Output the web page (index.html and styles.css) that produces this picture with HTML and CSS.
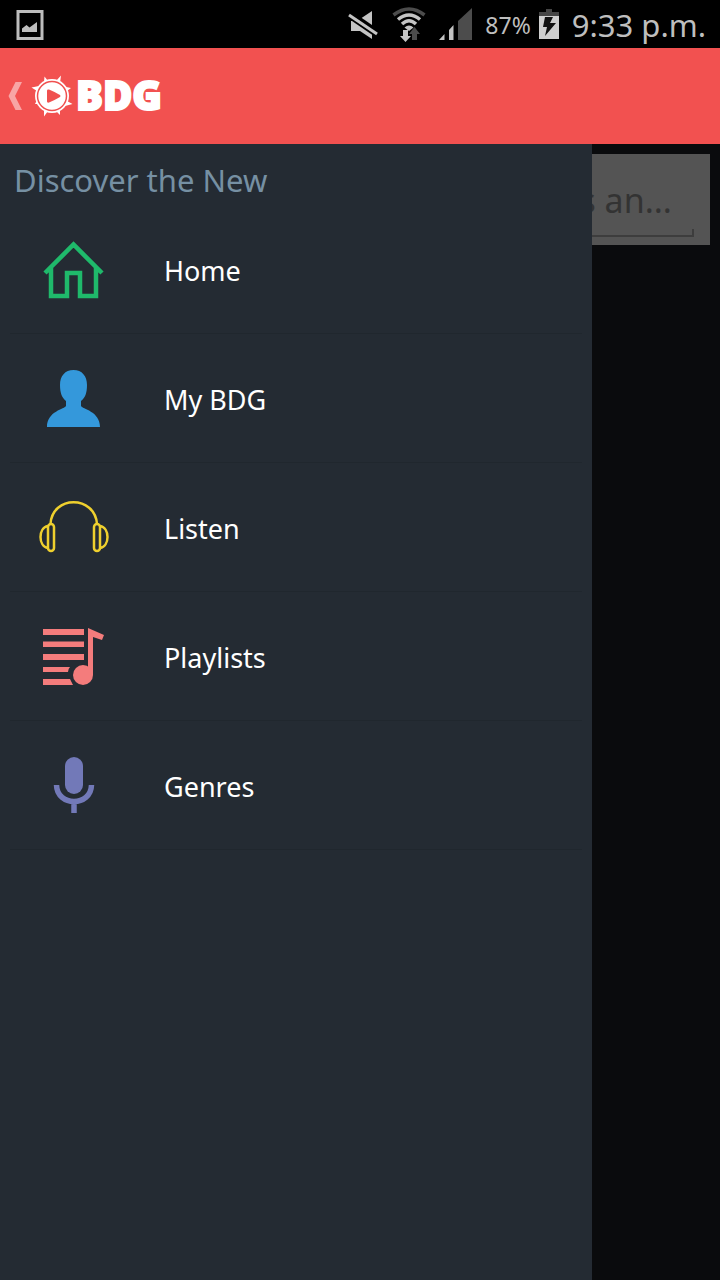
FILE: index.html
```html
<!DOCTYPE html>
<html lang="en">
<head>
<meta charset="utf-8">
<meta name="viewport" content="width=device-width, initial-scale=1">
<title>BDG</title>
<link rel="stylesheet" href="styles.css">
</head>
<body>
<div class="statusbar">
  <svg class="shot" width="28" height="32" viewBox="0 0 28 32"><path d="M2 3.500H26V30.500H2Z" fill="none" stroke="#bdbdbd" stroke-width="3"/><path d="M6 24V20.500L10.500 17L13.500 19.500L21 14V24Z" fill="#bdbdbd"/></svg>
  <div class="signals">
    <svg width="32" height="32" viewBox="0 0 32 32"><path d="M3 13H9L24 3V31L12 23H3Z" fill="#c4c4c4"/><path d="M1 6L30 26" stroke="#000" stroke-width="8"/><path d="M1 7L29 26" stroke="#c4c4c4" stroke-width="3"/></svg>
    <svg class="wifi" width="34" height="36" viewBox="0 0 34 36"><g fill="none" stroke-width="3.500"><path d="M1.500 9Q17-3 32.500 9" stroke="#4c4c4c"/><path d="M6 13.500Q17 4.500 28 13.500M10 18Q17 11.500 24 18" stroke="#c4c4c4"/></g><path d="M12.500 21.500Q17 17.500 21.500 21.500L17 25Z" fill="#c4c4c4"/><path d="M11 24H16V30H19L13.500 36L8 30H11Z" fill="#c4c4c4"/><path d="M20 34H25V28H28L22.500 21L17 28H20Z" fill="#4c4c4c"/></svg>
    <svg class="cell" width="34" height="34" viewBox="0 0 34 34"><path d="M1 33L6.500 27V33ZM11 23L15.500 18V33H11Z" fill="#c4c4c4"/><path d="M20 14L34 1V33H20Z" fill="#4c4c4c"/></svg>
    <span class="percent">87%</span>
    <svg class="battery" width="20" height="32" viewBox="0 0 20 32"><path d="M7 1H13V4H20V8H0V4H7Z" fill="#454545"/><path d="M0 8H20V31H0Z" fill="#cfcfcf"/><path d="M6 9H14L11 15H17L6 28L8 19H4Z" fill="#111"/></svg>
    <span class="time">9:33 p.m.</span>
  </div>
</div>
<header class="appbar">
  <button class="brand" aria-label="Back">
    <svg width="180" height="60" viewBox="0 -8 180 60"><path d="M15.500 8H22L15 22L22 36H15.500L8.500 22Z" fill="#f8a5a5"/>
      <g transform="translate(52 22)"><path d="M-7.500-19.500L-4-15L-8-14ZM9-20.500L8-13L4-15ZM19-8L15-5L14-9ZM20.500 8L13 10L15 5ZM8 19L4 15L8 14ZM-8 20.500L-8 13L-4 15ZM-17 8L-15 4L-13 8ZM-20.500-8.500L-13-10L-15-5Z" fill="#fff"/><circle r="17" fill="#fff"/><circle r="14.500" fill="none" stroke="#f0504f" stroke-width="1.500"/><path d="M-5-5.500Q-5-7-3-6.500Q3-4 8-1Q9 0 8 1Q3 4-3 6.500Q-5 7-5 5.500Z" fill="#f0504f"/></g>
      <text class="wordmark" x="76" y="36">BDG</text></svg>
  </button>
</header>
<main class="stage">
  <div class="search"><input class="search-input" type="text" aria-label="Search" placeholder="s an..."></div>
  <nav class="drawer">
    <h1 class="title">Discover the New</h1>
    <ul class="menu">
      <li><a class="item" href="#"><svg class="icon" viewBox="0 0 90 80"><path d="M15 42L43.500 13.500L72 42M21 37V65H37V42H50V65H66V37" fill="none" stroke="#1fb96b" stroke-width="4.500"/></svg>Home</a></li>
      <li><a class="item" href="#"><svg class="icon" viewBox="0 0 90 80"><path d="M43.500 10C52 10 57 16 57 25C57 33 55 38 51 41V46C52 49 70 51 70 67H17C17 51 35 49 36 46V41C32 38 30 33 30 25C30 16 35 10 43.500 10Z" fill="#3498db"/></svg>My BDG</a></li>
      <li><a class="item" href="#"><svg class="icon" viewBox="0 0 90 80"><g fill="none" stroke="#efd02e" stroke-width="2.500"><path d="M20.500 35C22 6 65 6 67 35"/><rect x="18" y="35" width="6" height="27" rx="3"/><rect x="64" y="35" width="6" height="27" rx="3"/><path d="M18 37C8 39 8 57 18 59M70 37C80 39 80 57 70 59"/></g></svg>Listen</a></li>
      <li><a class="item" href="#"><svg class="icon" viewBox="0 0 90 80"><path d="M13 11H54V17H13ZM13 23.500H54V29H13ZM13 36H54V42H13ZM13 49H40Q38 51 38 54H13ZM13 61H40L43 67H13Z" fill="#f47c7c"/><path d="M58 10L74 17L72 22L63 19V57H58Z" fill="#f47c7c"/><circle cx="53" cy="57" r="10" fill="#f47c7c"/></svg>Playlists</a></li>
      <li><a class="item" href="#"><svg class="icon" viewBox="0 0 90 80"><rect x="35" y="10" width="18" height="37" rx="9" fill="#7279b8"/><path d="M26.500 38C27 60 61 60 61.500 38M44 55V66" fill="none" stroke="#7279b8" stroke-width="5.500"/></svg>Genres</a></li>
    </ul>
  </nav>
</main>
</body>
</html>
```
FILE: styles.css
```css
* { box-sizing: border-box; }
body {
  margin: 0;
  min-height: 100vh;
  display: flex;
  flex-direction: column;
  background: #0a0b0d;
  font-family: "Noto Sans", sans-serif;
}
.statusbar {
  height: 48px;
  padding: 0 14px 0 16px;
  display: flex;
  align-items: center;
  justify-content: space-between;
  background: #000;
  color: #bebebe;
}
.signals { display: flex; align-items: center; }
.wifi { margin-left: 12px; }
.cell { margin-left: 12px; }
.percent { margin-left: 13px; padding-top: 2px; font-size: 23px; }
.battery { margin-left: 8px; }
.time { margin-left: 13px; font-size: 31px; line-height: 48px; padding-top: 2px; }
.appbar {
  height: 96px;
  display: flex;
  align-items: center;
  background: #f25150;
}
.brand { display: flex; padding: 0; border: 0; background: none; }
.wordmark {
  font: 800 40px "Open Sans", sans-serif;
  fill: #fff;
  stroke: #fff;
  stroke-width: 2px;
}
.stage { position: relative; flex: 1; padding: 10px; }
.search {
  height: 91px;
  padding: 10px 16px 8px;
  background: #545454;
}
.search-input {
  display: block;
  width: 100%;
  height: 73px;
  padding: 0 22px 2px 0;
  border: 0;
  outline: 0;
  text-align: right;
  font: 34px "Noto Sans", sans-serif;
  color: #333;
  background:
    linear-gradient(#3d3d3d, #3d3d3d) right bottom / 100% 2px no-repeat,
    linear-gradient(#3d3d3d, #3d3d3d) right bottom / 2px 8px no-repeat;
}
.search-input::placeholder { color: #333; opacity: 1; }
.drawer {
  position: absolute;
  inset: 0 128px 0 0;
  padding: 0 10px;
  background: #242b33;
}
.title {
  margin: 0;
  padding: 14px 4px 0;
  height: 61px;
  font-size: 31px;
  line-height: 44px;
  font-weight: 400;
  color: #7690a3;
}
.menu { margin: 0; padding: 0; list-style: none; }
.item {
  height: 129px;
  padding: 3px 0 0 20px;
  display: flex;
  align-items: center;
  gap: 44px;
  border-bottom: 1px solid #20272e;
  color: #fff;
  font-size: 27px;
  text-decoration: none;
}
.icon { width: 90px; height: 80px; }
```
